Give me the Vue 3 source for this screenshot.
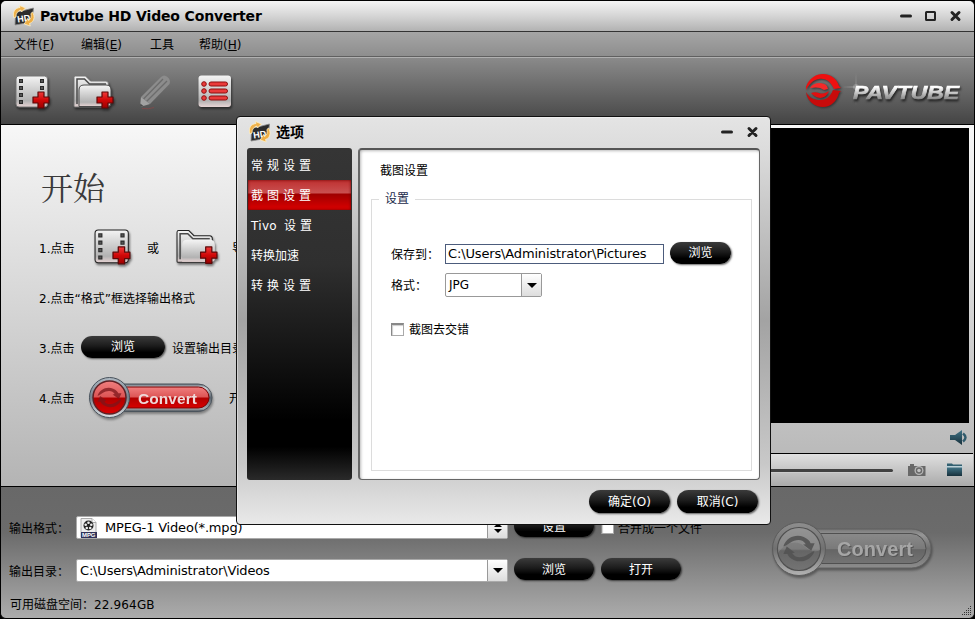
<template>
  <div class="window">
    <svg class="defs" width="0" height="0">
      <defs>
        <linearGradient id="silver" x1="0" y1="0" x2="0" y2="1">
          <stop offset="0" stop-color="#f4f4f4" />
          <stop offset="0.8" stop-color="#b2b2b2" />
          <stop offset="1" stop-color="#e8d4d4" />
        </linearGradient>
        <linearGradient id="red" x1="0" y1="0" x2="0" y2="1">
          <stop offset="0" stop-color="#f23a3a" />
          <stop offset="0.5" stop-color="#d00808" />
          <stop offset="1" stop-color="#9c0000" />
        </linearGradient>
        <linearGradient id="gloss" x1="0" y1="0" x2="0" y2="1">
          <stop offset="0" stop-color="#f07f7f" />
          <stop offset="0.48" stop-color="#dc5555" />
          <stop offset="0.52" stop-color="#b00000" />
          <stop offset="1" stop-color="#d80000" />
        </linearGradient>
        <linearGradient id="steel" x1="0" y1="0" x2="0" y2="1">
          <stop offset="0" stop-color="#66707a" />
          <stop offset="0.14" stop-color="#cbd0d4" />
          <stop offset="0.5" stop-color="#5a646e" />
          <stop offset="0.9" stop-color="#a3a9af" />
          <stop offset="1" stop-color="#474d53" />
        </linearGradient>
        <linearGradient id="ring" x1="0" y1="0" x2="0" y2="1">
          <stop offset="0" stop-color="#aeb9c2" />
          <stop offset="0.5" stop-color="#78838d" />
          <stop offset="1" stop-color="#dce0e3" />
        </linearGradient>
        <linearGradient id="greyGloss" x1="0" y1="0" x2="0" y2="1">
          <stop offset="0" stop-color="#8a8a8a" />
          <stop offset="0.5" stop-color="#7a7a7a" />
          <stop offset="0.54" stop-color="#656565" />
          <stop offset="1" stop-color="#747474" />
        </linearGradient>
        <linearGradient id="greySteel" x1="0" y1="0" x2="0" y2="1">
          <stop offset="0" stop-color="#777" />
          <stop offset="0.15" stop-color="#969696" />
          <stop offset="0.5" stop-color="#707070" />
          <stop offset="1" stop-color="#8c8c8c" />
        </linearGradient>
        <linearGradient id="greyRing" x1="0" y1="0" x2="0" y2="1">
          <stop offset="0" stop-color="#8e8e8e" />
          <stop offset="0.5" stop-color="#707070" />
          <stop offset="1" stop-color="#b4b4b4" />
        </linearGradient>
        <linearGradient id="logoText" x1="0" y1="0" x2="0" y2="1">
          <stop offset="0.2" stop-color="#fff" />
          <stop offset="0.85" stop-color="#808080" />
        </linearGradient>
        <linearGradient id="teal" x1="0" y1="0" x2="0" y2="1">
          <stop offset="0" stop-color="#3f7285" />
          <stop offset="1" stop-color="#17303b" />
        </linearGradient>
      </defs>

      <symbol id="plus" viewBox="0 0 18 18">
        <path d="M6 1h6v5h5v6h-5v5H6v-5H1V6h5z" fill="url(#red)" stroke="#5e0808" stroke-width="1.2" stroke-linejoin="round" />
      </symbol>

      <symbol id="film" viewBox="0 0 36 36">
        <rect x="1" y="1" width="31.500" height="31" rx="3" fill="url(#silver)" class="edge" />
        <path d="M4 4h4v4H4zM4 11h4v4H4zM4 18h4v4H4zM4 25h4v4H4zM25 4h4v4h-4zM25 11h4v4h-4z" fill="#2a2a2a" />
        <path d="M5 5h2v2H5zM5 12h2v2H5zM5 19h2v2H5zM5 26h2v2H5zM26 5h2v2h-2zM26 12h2v2h-2z" class="hole" />
        <use href="#plus" x="17" y="16" width="18" height="18" />
      </symbol>

      <symbol id="folder" viewBox="0 0 42 36">
        <path d="M1 31V2.500Q1 1 2.500 1H12.500l5 5H33q2.500 0 2.500 3v22q0 1-1 1H2q-1 0-1-1z" fill="url(#silver)" class="edge" />
        <path d="M4 29V4h7.500l5 5H33" fill="none" stroke="#4a4a4a" stroke-width="1.500" />
        <path d="M6 31V15q0-5 5-5h22q5 0 5 5v13q0 3.500-3.500 3.500H6z" fill="url(#silver)" stroke="#4a4a4a" />
        <use href="#plus" x="23" y="16" width="18" height="18" />
      </symbol>

      <symbol id="hd" viewBox="0 0 24 22">
        <path d="M3.500 7.500L21.500 3 20 17 3 20z" fill="#2c2c2c" stroke="#8a8a8a" stroke-width="0.800" />
        <text x="5" y="16.500" class="hd-text" transform="rotate(-9 12 12)">HD</text>
        <path d="M2 13C0 7 3 3 8 2.500L7.500.5l6 2.500-4 4-.7-2C5.500 6.500 4 8 4 12z" fill="#eeb14c" stroke="#fff1c8" stroke-width="0.800" />
        <path d="M20.500 7c3 5 1.500 10-3 11.500l.8 2.500-6-2 3.200-5.500.9 2c2.700-1 3-4 2.500-7z" fill="#eeae44" stroke="#fff1c8" stroke-width="0.800" />
      </symbol>

      <symbol id="swirl" viewBox="0 0 100 80">
        <path d="M4 34C12 8 40-4 64 6c12 5 18 12 20 18h12L86 46 62 28l8-1C62 12 42 10 22 24 16 28 10 32 4 34z" class="upper" />
        <path d="M4 34C12 8 40-4 64 6c12 5 18 12 20 18h12L86 46 62 28l8-1C62 12 42 10 22 24 16 28 10 32 4 34z" transform="rotate(180 50 40)" />
      </symbol>
    </svg>

    <header class="titlebar">
      <svg class="app-icon" width="24" height="22"><use href="#hd" /></svg>
      <h1>Pavtube HD Video Converter</h1>
      <svg class="win-controls" width="64" height="14" viewBox="0 0 64 14">
        <path d="M2.500 7h9" />
        <rect x="27" y="3" width="9" height="8" rx="0.500" class="box" />
        <path d="M53 3.500l7 7M60 3.500l-7 7" />
      </svg>
    </header>

    <nav class="menubar">
      <span v-for="item in menu" :key="item.text" :style="{ width: item.width + 'px' }">{{ item.text }}<template v-if="item.key">(<u>{{ item.key }}</u>)</template></span>
    </nav>

    <div class="toolbar">
      <svg class="tool film" width="36" height="36"><use href="#film" /></svg>
      <svg class="tool folder" width="42" height="36"><use href="#folder" /></svg>
      <svg class="tool pencil" width="34" height="38" viewBox="0 0 34 38">
        <path d="M3 23L23 3q3-3 6.500 0t2 7L12 30z" fill="#8c8c8c" />
        <path d="M5.500 25L25 5M8.500 27.500L29 7" stroke="#6c6c6c" stroke-width="1.300" fill="none" />
        <path d="M3 23l9 7-10 3z" fill="#a2a2a2" />
        <path d="M2.300 29.500l3.200 2.500L2 33z" fill="#4a4a4a" />
        <path d="M4 34.500q7 1 12-1" stroke="#7c4a4a" fill="none" />
      </svg>
      <svg class="tool list" width="36" height="36" viewBox="0 0 36 36">
        <rect x="0.500" y="0.500" width="32.500" height="31.500" rx="3" fill="url(#silver)" />
        <g fill="#ea3a3a" stroke="#8c1010">
          <template v-for="y in [9, 16, 23]" :key="y">
            <circle cx="6" :cy="y" r="2.300" />
            <rect x="11" :y="y - 2" width="18.500" height="4" rx="2" />
          </template>
        </g>
      </svg>
      <svg class="brand" width="160" height="46" viewBox="0 0 160 46">
        <g class="brand-mark">
          <path d="M1 15C4 6 11 2 18 2c8 0 14 5 16 12l2 2-7 1C26 10 21 6 14 7 8 8 4 12 1 18z" fill="#ee1010" />
          <path d="M1 20c1 9 9 15 17 15s14-6 16-14l2-2-8-1c-3 7-7 10-13 10C9 28 4 26 1 20z" fill="#c80b0b" />
          <path d="M5 16c3-5 12-7 17-2l1 3-4 1c-4-3-8-3-14-2z" fill="#f42a2a" />
          <path d="M6 21c5 6 13 7 17 0l1-2c-5 3-8 3-10 2-3-1-5-1-8 0z" fill="#e01010" />
        </g>
        <path d="M51 0l.7 14 14 1-14 1-.7 19-.7-19-14-1 14-1z" fill="#ddd" opacity="0.250" />
        <circle cx="51" cy="15" r="3" fill="#fff" opacity="0.200" />
        <text x="48" y="27" textLength="106" lengthAdjust="spacingAndGlyphs" class="brand-name">PAVTUBE</text>
      </svg>
    </div>

    <main class="content">
      <section class="guide">
        <h2>开始</h2>
        <div class="step">
          <span class="num">1.点击</span>
          <svg class="film outlined" width="38" height="38"><use href="#film" /></svg>
          <span class="or">或</span>
          <svg class="folder outlined" width="43" height="38"><use href="#folder" /></svg>
          <span class="tail">导</span>
        </div>
        <div class="step">2.点击“格式”框选择输出格式</div>
        <div class="step">
          <span class="num">3.点击</span>
          <button class="pill browse-step">浏览</button>
          <span>设置输出目录</span>
        </div>
        <div class="step">
          <span class="num">4.点击</span>
          <svg class="convert" width="130" height="46" viewBox="0 0 130 46">
            <rect x="20" y="9" width="105" height="27.500" rx="13.700" fill="url(#steel)" stroke="#4b545c" />
            <rect x="22" y="12" width="100" height="21" rx="10.500" fill="url(#gloss)" stroke="#800000" />
            <circle cx="22.500" cy="22.500" r="20" fill="url(#ring)" stroke="#47515b" />
            <circle cx="22.500" cy="22.500" r="16.500" fill="url(#gloss)" stroke="#5f2024" stroke-width="1.500" />
            <use href="#swirl" class="swirl" x="9.500" y="12" width="26" height="21" />
            <text x="51" y="28.500" textLength="59" class="convert-text">Convert</text>
          </svg>
          <span class="start">开</span>
        </div>
      </section>

      <section class="player">
        <div class="screen"></div>
        <div class="volume">
          <svg width="20" height="16" viewBox="0 0 20 16">
            <path d="M1 5h5l7-5v15l-7-5H1z" fill="url(#teal)" />
            <path d="M14 3.500q5 4 0 8" fill="none" stroke="#315b6c" stroke-width="2.500" />
          </svg>
        </div>
        <div class="transport">
          <div class="track"></div>
          <svg class="camera" width="18" height="14" viewBox="0 0 18 14">
            <path d="M0 3h2V1h4v2h11.500v10H0z" fill="#686868" />
            <circle cx="11" cy="7.500" r="4.500" fill="#b8b8b8" />
            <circle cx="11" cy="7.500" r="3.200" fill="#686868" />
            <circle cx="11" cy="7.500" r="1.800" fill="#c2c2c2" />
          </svg>
          <svg class="open" width="17" height="14" viewBox="0 0 17 14">
            <path d="M1 3V.5h5l1 1h9V3z" fill="#326071" />
            <path d="M0 3h17v1.500H0z" fill="#bad0d8" />
            <path d="M1 4.500h15V13H1z" fill="url(#teal)" />
          </svg>
        </div>
      </section>
    </main>

    <footer class="output">
      <div class="fields">
        <div class="row format">
          <label>输出格式：</label>
          <div class="combo">
            <svg class="mpg" width="18" height="20" viewBox="0 0 18 20">
              <path d="M1 .5h11l4 4v15H1z" fill="#eee" stroke="#aaa" />
              <path d="M12 .5v4h4" fill="#fff" stroke="#aaa" />
              <circle cx="8.500" cy="7.500" r="5" fill="#222" />
              <g fill="#eee">
                <circle cx="8.500" cy="4.700" r="1.300" /><circle cx="5.700" cy="6.700" r="1.300" />
                <circle cx="11.300" cy="6.700" r="1.300" /><circle cx="6.800" cy="10" r="1.300" />
                <circle cx="10.200" cy="10" r="1.300" />
              </g>
              <path d="M1 14h16v6H1z" fill="#303259" />
              <text x="2" y="19.300" textLength="13.500" class="mpg-text">MPG</text>
            </svg>
            <span>MPEG-1 Video(*.mpg)</span>
            <i class="spin"></i>
          </div>
          <button class="pill">设置</button>
          <span class="check"></span>
          <span class="merge">合并成一个文件</span>
        </div>
        <div class="row">
          <label>输出目录：</label>
          <div class="combo">
            <span>C:\Users\Administrator\Videos</span>
            <i class="drop"></i>
          </div>
          <button class="pill">浏览</button>
          <button class="pill">打开</button>
        </div>
        <p class="space">可用磁盘空间：<span>22.964GB</span></p>
      </div>
      <svg class="convert big" width="166" height="60" viewBox="0 0 166 60">
        <rect x="28" y="9" width="133" height="39" rx="19.500" fill="url(#greySteel)" stroke="#616161" />
        <rect x="28" y="13.500" width="128" height="30" rx="15" fill="url(#greyGloss)" stroke="#505050" />
        <circle cx="29" cy="29" r="26.500" fill="url(#greyRing)" stroke="#5c5c5c" />
        <circle cx="29" cy="29" r="21.500" fill="url(#greyGloss)" stroke="#505050" stroke-width="1.200" />
        <path d="M8 33C18 20 28 21 34 26s10 7 16 4A21 21 0 0 0 8 28z" fill="#aaa" opacity="0.300" />
        <use href="#swirl" class="swirl grey" x="12" y="15" width="34" height="27.200" />
        <text x="67" y="36" textLength="76" class="convert-text grey">Convert</text>
      </svg>
      <svg class="grip" width="11" height="11" viewBox="0 0 11 11">
        <path d="M9 1.500h1M7 3.500h1M9 3.500h1M5 5.500h1M7 5.500h1M9 5.500h1M3 7.500h1M5 7.500h1M7 7.500h1M9 7.500h1M1 9.500h1M3 9.500h1M5 9.500h1M7 9.500h1M9 9.500h1" stroke="#333" />
      </svg>
    </footer>

    <div class="dialog">
      <header class="dialog-title">
        <svg class="app-icon" width="24" height="22"><use href="#hd" /></svg>
        <strong>选项</strong>
        <svg class="win-controls" width="40" height="14" viewBox="0 0 40 14">
          <path d="M3.500 7h9M30 3.500l7 7M37 3.500l-7 7" />
        </svg>
      </header>
      <div class="dialog-body">
        <ul class="tabs">
          <li v-for="tab in tabs" :key="tab" :class="{ active: tab === current, tight: tab === '转换加速', mixed: tab.startsWith('Tivo') }" @click="current = tab">
            <template v-if="tab.startsWith('Tivo')">Tivo <span>设置</span></template>
            <template v-else>{{ tab }}</template>
          </li>
        </ul>
        <div class="panel">
          <h3>截图设置</h3>
          <fieldset>
            <legend>设置</legend>
            <div class="field path">
              <label>保存到：</label>
              <input v-model="path" type="text">
              <button class="pill">浏览</button>
            </div>
            <div class="field">
              <label>格式：</label>
              <div class="select"><span>JPG</span><i class="drop"></i></div>
            </div>
            <div class="deinterlace"><span class="check"></span>截图去交错</div>
          </fieldset>
        </div>
      </div>
      <div class="actions">
        <button class="pill">确定(O)</button>
        <button class="pill">取消(C)</button>
      </div>
    </div>
  </div>
</template>

<script setup>
import { ref } from 'vue'

const menu = [
  { text: '文件', key: 'F', width: 67 },
  { text: '编辑', key: 'E', width: 69 },
  { text: '工具', width: 49 },
  { text: '帮助', key: 'H', width: 60 },
]

const tabs = ['常规设置', '截图设置', 'Tivo 设置', '转换加速', '转换设置']
const current = ref('截图设置')
const path = ref('C:\\Users\\Administrator\\Pictures')
</script>

<style>
body {
  background: #000;
}
</style>

<style scoped>
* {
  box-sizing: border-box;
}

.window {
  position: relative;
  width: 975px;
  height: 619px;
  display: flex;
  flex-direction: column;
  overflow: hidden;
  border: 1px solid #000;
  border-radius: 6px;
  background: #888;
  font: 12px/16px 'DejaVu Sans', 'Noto Sans CJK SC', sans-serif;
  color: #000;
}

.defs { position: absolute; }

h1, h2, h3, p, ul { margin: 0; padding: 0; }

.titlebar {
  height: 31px;
  flex-shrink: 0;
  display: flex;
  align-items: center;
  padding: 0 11px;
  background: linear-gradient(#f4f4f4, #d5d5d5 50%, #b2b2b2);
  border-bottom: 1px solid #333;
}

.app-icon { margin-right: 4px; flex-shrink: 0; }
.hd-text { font: bold 9px 'Liberation Sans', sans-serif; fill: #fff; }

h1 { font-size: 14px; letter-spacing: -0.15px; white-space: nowrap; }

.win-controls {
  margin-left: auto;
  fill: none;
  stroke: #222;
  stroke-width: 3;
  stroke-linecap: round;
}
.win-controls .box { stroke-width: 2; }

.menubar {
  height: 25px;
  flex-shrink: 0;
  display: flex;
  align-items: center;
  padding: 1px 0 0 13px;
  background: linear-gradient(#a5a5a5, #8e8e8e);
  border-bottom: 1px solid #606060;
}

.toolbar {
  height: 68px;
  flex-shrink: 0;
  display: flex;
  align-items: flex-start;
  padding: 17px 9px 0 14px;
  border-top: 1px solid #b0b0b0;
  border-bottom: 1px solid #000;
  background: linear-gradient(#8a8a8a, #444);
}
.tool { filter: drop-shadow(1px 2px 1px rgba(0,0,0,0.5)); }
.tool.folder { margin-left: 22px; }
.tool.pencil { margin-left: 23px; margin-top: -1px; filter: none; }
.tool.list { margin-left: 26px; }
.brand { margin-left: auto; margin-top: -3px; overflow: visible; }
.brand-mark { filter: drop-shadow(1px 1px 1px #333); }
.brand-name {
  font: italic bold 18px 'Liberation Sans', sans-serif;
  fill: url(#logoText);
  stroke: url(#logoText);
  stroke-width: 0.6;
  filter: drop-shadow(1px 2px 1px #222);
}

.content {
  height: 362px;
  flex-shrink: 0;
  display: flex;
  border-bottom: 1px solid #000;
  background: linear-gradient(#f7f7f7, #b4b4b4);
}

.guide {
  width: 640px;
  padding: 38px 0 0 38px;
}
.guide h2 {
  height: 61px;
  font: 400 32px/46px 'Noto Serif CJK SC', 'Noto Sans CJK SC', serif;
  color: #3a3a3a;
  padding-left: 2px;
}
.step { height: 50px; display: flex; align-items: center; white-space: nowrap; }
.step svg { margin-top: -2px; }
.num { width: 36px; }
.edge { stroke: none; }
.hole { fill: #555; }
.outlined { --line: #222; overflow: visible; filter: drop-shadow(1px 2px 1px rgba(0,0,0,0.5)); stroke: var(--line); stroke-width: 0.01; }
.outlined.film { margin-left: 19px; }
.outlined.folder { margin-left: 17px; }
.edge { stroke: var(--line, #777); stroke-width: 1; }
.or { margin-left: 15px; width: 12px; }
.tail { margin-left: 13px; }
.start { margin-left: 12px; }

.pill {
  height: 22px;
  width: 80px;
  padding: 1px 0 0;
  border: 0;
  border-radius: 11px;
  background: linear-gradient(#3b3b3b, #1c1c1c 45%, #000 75%);
  box-shadow: 1px 1px 2px rgba(0,0,0,0.6);
  font: inherit;
  color: #fff;
  flex-shrink: 0;
}
.browse-step { width: 84px; margin: 0 7px 5px 6px; }

.convert { margin-left: 12px; filter: drop-shadow(1px 2px 1px rgba(0,0,0,0.35)); flex-shrink: 0; }
.convert-text { font: bold 15.5px 'Liberation Sans', sans-serif; fill: #eed9d9; }
.convert-text.grey { font-size: 20px; fill: #a6a6a6; filter: drop-shadow(1px 1px 0 #555); }
.swirl { fill: #7c161b; opacity: 0.75; }
.swirl.grey { fill: #535353; opacity: 0.9; }

.player { width: 328px; padding-top: 3px; }
.screen { height: 295px; background: #000; }
.volume { height: 30px; display: flex; align-items: center; justify-content: flex-end; }
.transport {
  height: 33px;
  margin-right: -4px;
  display: flex;
  align-items: center;
  border-top: 1px solid #000;
  background: linear-gradient(#e0e0e0, #aaa);
}
.track { width: 252px; height: 3px; border-radius: 2px; background: #414141; box-shadow: 0 1px 0 #ccc; }
.camera { margin-left: 15px; }
.open { margin-left: 20px; }

.output {
  flex: 1;
  display: flex;
  position: relative;
  background: linear-gradient(#686868, #6b6b6b 35%, #acacac);
  border-radius: 0 0 5px 5px;
}
.fields { width: 769px; padding: 29px 0 0 8px; flex-shrink: 0; }
.row { display: flex; align-items: center; height: 23px; margin-bottom: 20px; }
.row label { width: 67px; white-space: nowrap; padding-top: 2px; }
.row .pill { margin: -3px 0 0 7px; }
.combo {
  width: 432px;
  height: 23px;
  display: flex;
  align-items: center;
  padding-left: 3px;
  background: #fff;
  border: 1px solid #aaa;
  border-radius: 2px;
  font-size: 13px;
  letter-spacing: -0.18px;
}
.mpg { margin-right: 7px; }
.mpg-text { font: bold 6px 'Liberation Sans', sans-serif; fill: #fff; letter-spacing: 0; }
.row .pill:nth-of-type(1) { margin-left: 6px; }

.drop, .spin {
  align-self: stretch;
  width: 20px;
  margin-left: auto;
  border-left: 1px solid #999;
  background: linear-gradient(#fff, #ddd);
  display: flex;
  flex-direction: column;
  align-items: center;
  justify-content: center;
  gap: 2px;
}
.drop::after, .spin::after { content: ''; border: 5px solid transparent; border-top-color: #000; border-bottom: 0; }
.spin::before { content: ''; border: 4px solid transparent; border-bottom-color: #000; border-top: 0; }
.spin::after { border-width: 4px 4px 0; }

.check {
  width: 13px;
  height: 13px;
  background: #fff;
  border: 1px solid #aaa;
  border-top: 2px solid #888;
  border-left-color: #888;
  box-shadow: inset 1px 1px 1px #ccc;
}
.row .check { margin-left: 7px; }
.merge { margin-left: 4px; padding-top: 2px; }
.space { margin-top: -5px; padding-left: 1px; }
.space span { letter-spacing: 0.15px; }
.convert.big { margin: 33px 0 0 0; }
.grip { position: absolute; right: 2px; bottom: 2px; }

.dialog {
  position: absolute;
  left: 235px;
  top: 115px;
  width: 535px;
  height: 409px;
  border: 1px solid #111;
  border-radius: 4px;
  background: linear-gradient(#e4e4e4, #dcdcdc 8%, #a3a3a3 50%, #c8c8c8 85%, #e9e9e9);
  box-shadow: inset 1px 1px 0 rgba(255,255,255,0.4);
}
.dialog-title { height: 31px; display: flex; align-items: center; padding: 0 11px 2px; }
.dialog-title strong { font-size: 14px; }
.dialog-body { display: flex; height: 332px; padding: 0 10px; gap: 6px; }

.tabs {
  width: 105px;
  list-style: none;
  border-radius: 3px;
  padding: 2px 1px;
  background: linear-gradient(#353535, #2f2f2f 35%, #000 82%, #000 90%, #2a2a2a);
  color: #fff;
}
.tabs li { height: 30px; padding-left: 3px; line-height: 32px; letter-spacing: 4px; white-space: nowrap; }
.tabs li.tight { letter-spacing: 0; }
.tabs li.mixed { letter-spacing: 0.3px; word-spacing: 3px; }
.tabs li.mixed span { letter-spacing: 4px; }
.tabs li.active {
  background: linear-gradient(#bf3030, #c95050 42%, #a00000 48%, #dc0000);
  box-shadow: inset 0 0 3px #600;
}

.panel {
  width: 402px;
  padding: 13px 7px 8px 12px;
  border: 1px solid #666;
  border-top: 2px solid #555;
  border-left: 2px solid #666;
  border-radius: 4px;
  background: #fff;
  box-shadow: inset 1px 1px 3px #bbb;
}
h3 { font-size: 12px; font-weight: 400; padding-left: 8px; line-height: 16px; }
fieldset {
  height: 280px;
  margin: 12px 0 0 -1px;
  padding: 34px 0 0 19px;
  border: 1px solid #dcdcdc;
}
legend { padding: 0 6px; margin-left: -12px; color: #1b2b4b; }
.field { display: flex; align-items: center; height: 24px; }
.field label { width: 54px; white-space: nowrap; padding-top: 2px; }
.field.path { margin-bottom: 7px; height: 25px; }
.field input {
  width: 219px;
  height: 20px;
  padding: 0 2px;
  border: 1px solid #4c5c7c;
  background: #fff;
  font: 13px 'DejaVu Sans', sans-serif;
  letter-spacing: -0.15px;
  outline: 0;
}
.field .pill { width: 61px; margin: -2px 0 0 6px; }
.select {
  width: 97px;
  height: 24px;
  display: flex;
  align-items: center;
  padding-left: 3px;
  border: 1px solid #999;
  border-radius: 2px;
}
.deinterlace { display: flex; align-items: center; gap: 5px; margin-top: 25px; }
.deinterlace .check { margin-top: -1px; }

.actions { display: flex; justify-content: flex-end; gap: 7px; padding: 10px 12px 0; }
.actions .pill { width: 81px; height: 23px; border-radius: 12px; }
</style>
